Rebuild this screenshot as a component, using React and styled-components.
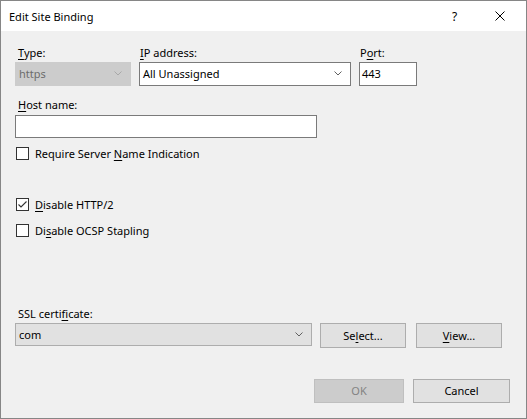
import React from "react";
import styled, { createGlobalStyle } from "styled-components";

const Global = createGlobalStyle`
  html, body { margin: 0; padding: 0; background: #f0f0f0; }
  body { font-family: "Noto Sans", "Segoe UI", sans-serif; font-size: 11px; color: #000; }
  * { box-sizing: border-box; }
`;

const Window = styled.div`
  width: 527px;
  height: 419px;
  border: 1px solid #868686;
  display: flex;
  flex-direction: column;
  background: #f0f0f0;
`;

const TitleBar = styled.div`
  height: 30px;
  background: #fff;
  display: flex;
  align-items: center;
  padding-left: 8px;
  padding-right: 4px;
`;

const Title = styled.div`
  flex: 1;
  font-size: 11px;
  line-height: 15px;
`;

const TitleButton = styled.div`
  width: 45px;
  height: 30px;
  display: flex;
  align-items: center;
  justify-content: center;
  font-size: 12px;
`;

const Body = styled.div`
  flex: 1;
  display: flex;
  flex-direction: column;
  padding: 14px 15px 15px 14px;
`;

const TopRow = styled.div`
  display: grid;
  grid-template-columns: 116px 212px 58px;
  column-gap: 8px;
`;

const Field = styled.div`
  display: flex;
  flex-direction: column;
  margin-top: ${(p) => p.$mt || 0}px;
`;

const Label = styled.div`
  line-height: 15px;
  height: 15px;
  padding-left: ${(p) => (p.$flush ? 1 : 3)}px;
  margin-bottom: ${(p) => p.$mb ?? 2}px;
  white-space: nowrap;
`;

const Key = styled.span`
  text-decoration: underline;
  text-underline-offset: 2px;
`;

const Combo = styled.div`
  height: ${(p) => p.$h || 24}px;
  width: ${(p) => (p.$w ? p.$w + "px" : "auto")};
  display: flex;
  align-items: center;
  padding: 0 8px 1px 3px;
  border: 1px solid
    ${(p) => (p.$variant === "disabled" ? "#cccccc" : p.$variant === "button" ? "#adadad" : "#7a7a7a")};
  background: ${(p) => (p.$variant === "disabled" ? "#cccccc" : p.$variant === "button" ? "#e1e1e1" : "#ffffff")};
  color: ${(p) => (p.$variant === "disabled" ? "#6d6d6d" : "#000")};
`;

const ComboText = styled.span`
  flex: 1;
  white-space: nowrap;
  line-height: 15px;
`;

const TextBox = styled.div`
  height: ${(p) => p.$h || 24}px;
  width: ${(p) => (p.$w ? p.$w + "px" : "auto")};
  border: 1px solid #7a7a7a;
  background: #fff;
  display: flex;
  align-items: center;
  padding: 0 0 1px 2px;
  line-height: 15px;
`;

const CheckRow = styled.div`
  display: flex;
  align-items: center;
  height: 15px;
  margin-top: ${(p) => p.$mt || 0}px;
  white-space: nowrap;
`;

const Box = styled.div`
  width: 13px;
  height: 13px;
  border: 1px solid #333333;
  background: #fff;
  margin-left: 1px;
  margin-right: 6px;
  display: flex;
  align-items: center;
  justify-content: center;
`;

const Section = styled.div`
  margin-top: auto;
  display: flex;
  flex-direction: column;
`;

const CertRow = styled.div`
  display: flex;
  align-items: flex-start;
  height: 25px;
`;

const Button = styled.div`
  width: ${(p) => p.$w}px;
  height: ${(p) => p.$h || 25}px;
  margin-left: ${(p) => p.$ml || 0}px;
  padding-bottom: 1px;
  border: 1px solid ${(p) => (p.$disabled ? "#bfbfbf" : "#adadad")};
  background: ${(p) => (p.$disabled ? "#cccccc" : "#e1e1e1")};
  color: ${(p) => (p.$disabled ? "#838383" : "#000")};
  display: flex;
  align-items: center;
  justify-content: center;
  line-height: 15px;
`;

const Footer = styled.div`
  margin-top: 31px;
  display: flex;
  justify-content: flex-end;
  padding-right: 1px;
`;

const Chevron = ({ color = "#606060" }) => (
  <svg width="8" height="5" viewBox="0 0 8 5">
    <polyline points="0.5,0.5 4,4 7.5,0.5" fill="none" stroke={color} strokeWidth="1" />
  </svg>
);

const Check = () => (
  <svg width="11" height="11" viewBox="0 0 11 11">
    <polyline points="1.5,5.5 4,8 9.5,2.5" fill="none" stroke="#333" strokeWidth="1.1" />
  </svg>
);

const CloseIcon = () => (
  <svg width="10" height="10" viewBox="0 0 10 10">
    <path d="M0.5 0.5 L9.5 9.5 M9.5 0.5 L0.5 9.5" stroke="#000" strokeWidth="1" fill="none" />
  </svg>
);

const CheckBox = ({ checked, children, mt }) => (
  <CheckRow $mt={mt}>
    <Box>{checked && <Check />}</Box>
    <span>{children}</span>
  </CheckRow>
);

export default function App() {
  return (
    <>
      <Global />
      <Window>
        <TitleBar>
          <Title>Edit Site Binding</Title>
          <TitleButton>?</TitleButton>
          <TitleButton>
            <CloseIcon />
          </TitleButton>
        </TitleBar>
        <Body>
          <TopRow>
            <Field>
              <Label>
                <Key>T</Key>ype:
              </Label>
              <Combo $variant="disabled">
                <ComboText>https</ComboText>
                <Chevron color="#a8a8a8" />
              </Combo>
            </Field>
            <Field>
              <Label $flush>
                <Key>I</Key>P address:
              </Label>
              <Combo>
                <ComboText>All Unassigned</ComboText>
                <Chevron />
              </Combo>
            </Field>
            <Field>
              <Label $flush>
                P<Key>o</Key>rt:
              </Label>
              <TextBox>443</TextBox>
            </Field>
          </TopRow>
          <Field $mt={11}>
            <Label $mb={3}>
              <Key>H</Key>ost name:
            </Label>
            <TextBox $w={302} $h={23} />
          </Field>
          <CheckBox mt={8}>
            Require Server <Key>N</Key>ame Indication
          </CheckBox>
          <CheckBox mt={36} checked>
            <Key>D</Key>isable HTTP/2
          </CheckBox>
          <CheckBox mt={11}>
            Di<Key>s</Key>able OCSP Stapling
          </CheckBox>
          <Section>
            <Label>
              SSL certi<Key>f</Key>icate:
            </Label>
            <CertRow>
              <Combo $variant="button" $w={297} $h={23}>
                <ComboText>com</ComboText>
                <Chevron />
              </Combo>
              <Button $w={86} $ml={8}>
                Se<Key>l</Key>ect...
              </Button>
              <Button $w={86} $ml={10}>
                <Key>V</Key>iew...
              </Button>
            </CertRow>
          </Section>
          <Footer>
            <Button $w={90} $h={24} $disabled>
              OK
            </Button>
            <Button $w={97} $h={24} $ml={9}>
              Cancel
            </Button>
          </Footer>
        </Body>
      </Window>
    </>
  );
}
